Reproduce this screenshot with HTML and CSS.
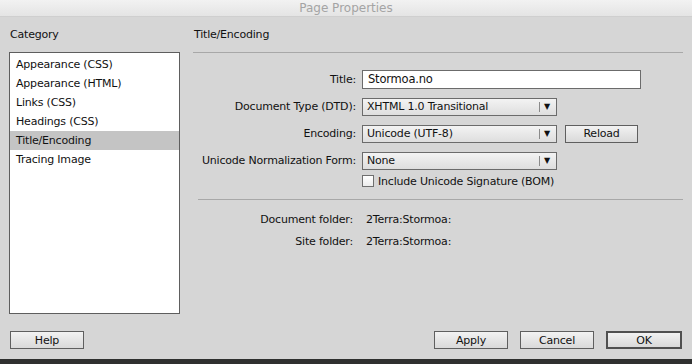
FILE: index.html
```html
<!DOCTYPE html>
<html lang="en">
<head>
    <meta charset="UTF-8">
    <meta name="viewport" content="width=device-width, initial-scale=1.0">
    <link rel="stylesheet" href="styles.css">
    <title>Page Properties</title>
</head>
<body>
    <div class="window">
        <div class="titlebar">Page Properties</div>
        <div class="main">
            <div class="sidebar">
                <div class="heading">Category</div>
                <ul class="list">
                    <li>Appearance (CSS)</li>
                    <li>Appearance (HTML)</li>
                    <li>Links (CSS)</li>
                    <li>Headings (CSS)</li>
                    <li class="selected">Title/Encoding</li>
                    <li>Tracing Image</li>
                </ul>
            </div>
            <div class="panel">
                <div class="heading panel-heading">Title/Encoding</div>
                <div class="form">
                    <div class="row">
                        <label class="label">Title:</label>
                        <div class="textbox">Stormoa.no</div>
                    </div>
                    <div class="row">
                        <label class="label">Document Type (DTD):</label>
                        <div class="select">
                            <span class="value">XHTML 1.0 Transitional</span>
                            <span class="arrow">&#9660;</span>
                        </div>
                    </div>
                    <div class="row">
                        <label class="label">Encoding:</label>
                        <div class="select">
                            <span class="value">Unicode (UTF-8)</span>
                            <span class="arrow">&#9660;</span>
                        </div>
                        <button class="button reload">Reload</button>
                    </div>
                    <div class="row">
                        <label class="label">Unicode Normalization Form:</label>
                        <div class="select">
                            <span class="value">None</span>
                            <span class="arrow">&#9660;</span>
                        </div>
                    </div>
                    <div class="row check-row">
                        <span class="label"></span>
                        <span class="checkbox"></span>
                        <span>Include Unicode Signature (BOM)</span>
                    </div>
                </div>
                <div class="separator"></div>
                <div class="info">
                    <div class="info-row">
                        <span class="info-label">Document folder:</span>
                        <span>2Terra:Stormoa:</span>
                    </div>
                    <div class="info-row">
                        <span class="info-label">Site folder:</span>
                        <span>2Terra:Stormoa:</span>
                    </div>
                </div>
            </div>
        </div>
        <div class="footer">
            <button class="button">Help</button>
            <div class="actions">
                <button class="button">Apply</button>
                <button class="button">Cancel</button>
                <button class="button default">OK</button>
            </div>
        </div>
    </div>
</body>
</html>
```

FILE: styles.css
```css
body {
    margin: 0;
    background-color: #2f302f;
    font-family: 'DejaVu Sans', sans-serif;
    font-size: 11px;
    letter-spacing: -0.2px;
    color: #111;
}

.window {
    width: 692px;
    height: 359px;
    background-color: #d6d6d6;
    display: flex;
    flex-direction: column;
}

.titlebar {
    height: 17px;
    line-height: 17px;
    text-align: center;
    font-size: 12px;
    letter-spacing: 0;
    color: #a4a4a4;
    background: linear-gradient(#f2f2f2, #e4e4e4);
    box-sizing: border-box;
    border-bottom: 1px solid #cfcfcf;
}

.main {
    display: flex;
    padding-left: 9px;
}

.sidebar {
    width: 171px;
}

.heading {
    height: 35px;
    line-height: 36px;
    padding-left: 1px;
    box-sizing: border-box;
}

.list {
    list-style: none;
    margin: 0;
    padding: 2px 0 0 0;
    height: 262px;
    box-sizing: border-box;
    background-color: #fff;
    border: 1px solid #5e5e5e;
}

.list li {
    height: 19px;
    line-height: 19px;
    padding-left: 6px;
}

.list li.selected {
    background-color: #c4c4c4;
}

.panel {
    margin-left: 13px;
    width: 490px;
}

.panel-heading {
    border-bottom: 1px solid #a8a8a8;
    height: 36px;
}

.form {
    padding-top: 17px;
}

.row {
    display: flex;
    align-items: center;
    height: 19px;
    margin-bottom: 8px;
}

.label {
    width: 163px;
    text-align: right;
    margin-right: 6px;
    flex-shrink: 0;
}

.textbox {
    width: 279px;
    height: 19px;
    box-sizing: border-box;
    background-color: #fff;
    border: 1px solid #6b6b6b;
    padding-left: 5px;
    line-height: 17px;
    font-size: 11.5px;
}

.select {
    width: 195px;
    height: 18px;
    box-sizing: border-box;
    border: 1px solid #6b6b6b;
    background: linear-gradient(#f3f3f3, #dedede);
    display: flex;
    align-items: center;
}

.select .value {
    flex: 1;
    padding-left: 4px;
}

.select .arrow {
    width: 14px;
    height: 10px;
    line-height: 10px;
    font-size: 8px;
    text-align: center;
    border-left: 1px solid #8a8a8a;
    margin-right: 2px;
    color: #111;
}

.button {
    font-family: 'DejaVu Sans', sans-serif;
    font-size: 11px;
    letter-spacing: -0.2px;
    color: #111;
    width: 74px;
    height: 18px;
    padding: 0;
    border: 1px solid #5f5f5f;
    background: linear-gradient(#f2f2f2, #d9d9d9);
    box-sizing: border-box;
}

.reload {
    margin-left: 8px;
    width: 73px;
}

.check-row {
    margin-top: -3px;
    height: 12px;
}

.checkbox {
    width: 12px;
    height: 12px;
    box-sizing: border-box;
    border: 1px solid #6f6f6f;
    background: linear-gradient(#fff, #ececec);
    margin-left: 0;
    margin-right: 4px;
}

.separator {
    margin: 12px 0 0 5px;
    border-top: 1px solid #a8a8a8;
}

.info {
    padding-top: 10px;
}

.info-row {
    display: flex;
    height: 22px;
    line-height: 19px;
}

.info-label {
    width: 160px;
    text-align: right;
    margin-right: 13px;
}

.footer {
    display: flex;
    justify-content: space-between;
    padding: 17px 10px 0 10px;
}

.actions {
    display: flex;
    gap: 12px;
}

.actions .button {
    width: 74px;
}

.actions .default {
    width: 76px;
    border: 2px solid #505050;
}
```
